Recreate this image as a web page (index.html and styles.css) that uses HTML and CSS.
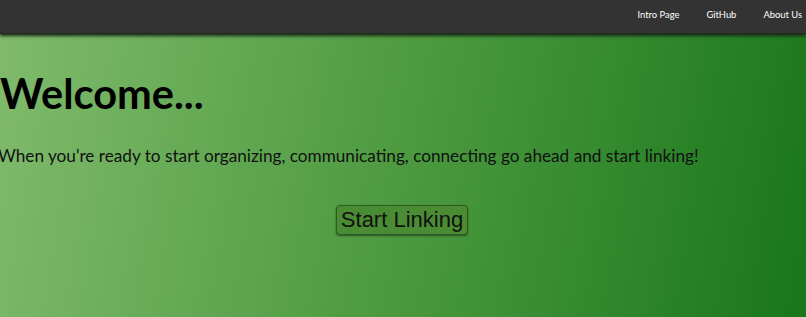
FILE: index.html
```html
<!DOCTYPE html>
<html lang="en">
<head>
    <meta charset="UTF-8" />
    <meta name="viewport" content="width=device-width, initial-scale=1.0"/>
    <title>Welcome</title>
    <link rel="stylesheet" href="styles.css">
</head>
<body>
    <nav class="navbar">
        <a href="#">Intro Page</a>
        <a href="#">GitHub</a>
        <a href="#">About Us</a>
    </nav>
    <main class="welcome">
        <h1>Welcome...</h1>
        <p>When you're ready to start organizing, communicating, connecting go ahead and start linking!</p>
        <div class="start">
            <button>Start Linking</button>
        </div>
    </main>
</body>
</html>
```

FILE: styles.css
```css
html, body {
    height: 100%;
}

body {
    margin: 0;
    font-family: Lato, "Open Sans", sans-serif;
    background: linear-gradient(100deg, #80bb6c 0%, #4d9a40 50%, #19761b 100%);
    display: flex;
    flex-direction: column;
}

.navbar {
    background-color: #333333;
    height: 33px;
    display: flex;
    justify-content: flex-end;
    align-items: center;
    box-shadow: 0 2px 3px #1b2a19;
    border-bottom: 1px solid #1e2a1c;
}

.navbar a {
    color: #ffffff;
    text-decoration: none;
    font-size: 9.4px;
    padding: 0 13.5px 5px;
}

.navbar a:last-child {
    padding-right: 4px;
}

.welcome {
    flex: 1;
    margin-left: -2px;
}

h1 {
    font-size: 41.5px;
    font-weight: bold;
    color: #000;
    margin: 34px 0 0 2px;
    line-height: 50px;
}

p {
    font-size: 17.2px;
    color: #111;
    margin: 27px 0 0;
}

.start {
    display: flex;
    justify-content: center;
    margin-top: 39px;
}

button {
    font-family: "Liberation Sans", Arial, sans-serif;
    font-size: 22px;
    color: #111;
    background-color: #4a8c34;
    border: 1px solid #2c5a22;
    border-radius: 4px;
    padding: 0 4px;
    height: 30px;
    box-shadow: 0 1px 2px #2a5522;
}
```
